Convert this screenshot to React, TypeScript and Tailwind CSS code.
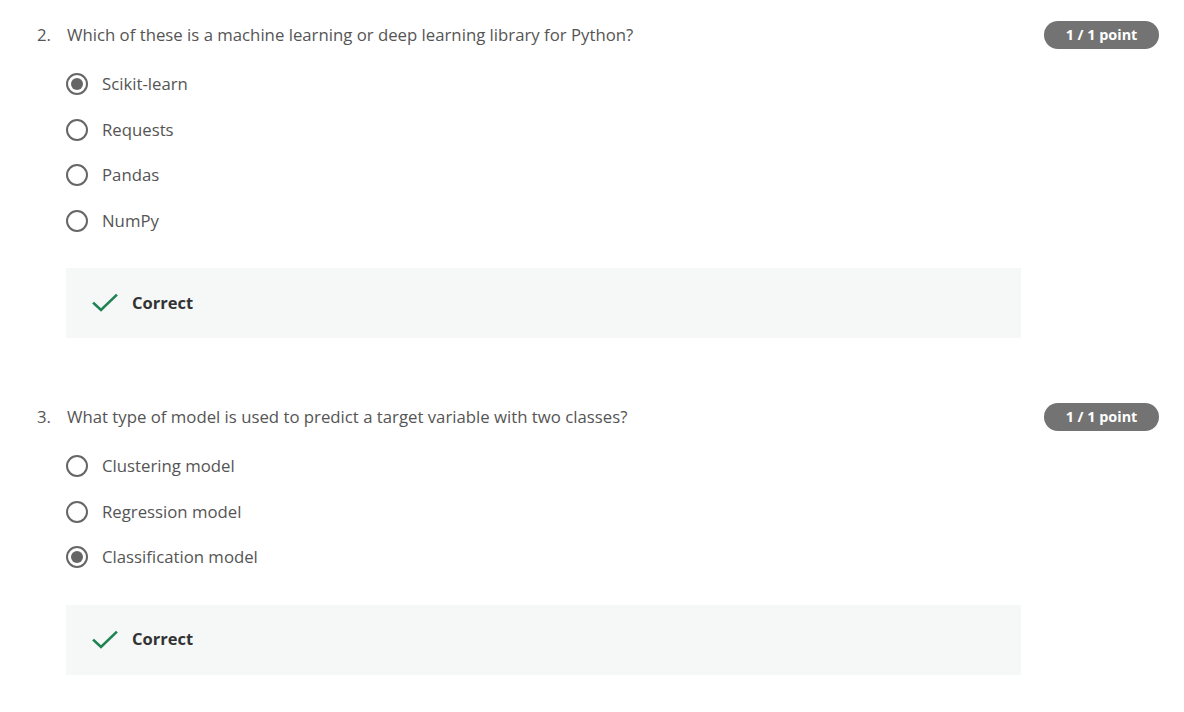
import React from "react";

const Radio = ({ checked }: { checked?: boolean }) => (
  <span className="flex h-[22px] w-[22px] shrink-0 items-center justify-center rounded-full border-2 border-[#666666] bg-white">
    {checked && <span className="h-[12px] w-[12px] rounded-full bg-[#666666]" />}
  </span>
);

const Check = () => (
  <svg width="26" height="20" viewBox="0 0 26 20" fill="none">
    <path d="M2 10.5 L9 17 L24 2.5" stroke="#1f8354" strokeWidth="2.6" strokeLinecap="square" />
  </svg>
);

type Q = { n: string; text: string; options: { label: string; checked?: boolean }[] };

const Question = ({ q }: { q: Q }) => (
  <div className="flex flex-col">
    <div className="flex h-[28px] items-center justify-between">
      <div className="flex items-center text-[16.75px] leading-[24px] text-[#555555]">
        <span className="w-[30px]">{q.n}</span>
        <span>{q.text}</span>
      </div>
      <span className="flex h-[28px] w-[115px] items-center justify-center rounded-full bg-[#737373] text-[14.4px] font-bold text-white">
        1 / 1 point
      </span>
    </div>
    <div className="mt-[24px] flex flex-col gap-[23.5px] pl-[29px]">
      {q.options.map((o) => (
        <div key={o.label} className="flex h-[22px] items-center gap-[14px] text-[16.75px] text-[#555555]">
          <Radio checked={o.checked} />
          <span>{o.label}</span>
        </div>
      ))}
    </div>
    <div className="mt-[36.5px] ml-[29px] flex h-[70px] w-[955px] items-center gap-[14px] bg-[#f5f8f7] pl-[26px]">
      <Check />
      <span className="text-[16.5px] font-bold text-[#333333]">Correct</span>
    </div>
  </div>
);

export default function App() {
  const qs: Q[] = [
    {
      n: "2.",
      text: "Which of these is a machine learning or deep learning library for Python?",
      options: [{ label: "Scikit-learn", checked: true }, { label: "Requests" }, { label: "Pandas" }, { label: "NumPy" }],
    },
    {
      n: "3.",
      text: "What type of model is used to predict a target variable with two classes?",
      options: [{ label: "Clustering model" }, { label: "Regression model" }, { label: "Classification model", checked: true }],
    },
  ];
  return (
    <div className="h-[712px] w-[1184px] bg-white pl-[37px] pr-[25px] pt-[21px]" style={{ fontFamily: '"Open Sans", sans-serif' }}>
      <div className="flex flex-col gap-[65px]">
        {qs.map((q) => (
          <Question key={q.n} q={q} />
        ))}
      </div>
    </div>
  );
}
